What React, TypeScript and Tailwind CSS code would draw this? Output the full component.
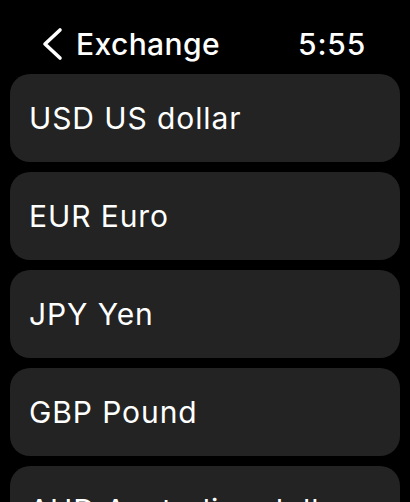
import React from 'react';

const CURRENCIES = [
  { code: 'USD', name: 'US dollar' },
  { code: 'EUR', name: 'Euro' },
  { code: 'JPY', name: 'Yen' },
  { code: 'GBP', name: 'Pound' },
  { code: 'AUD', name: 'Australian dollar' },
];

export default function App() {
  return (
    <div
      className="h-[502px] w-[410px] overflow-hidden bg-black text-white"
      style={{ fontFamily: 'Inter, "Noto Sans", sans-serif' }}
    >
      {/* Header */}
      <div className="flex h-[74px] items-center justify-between pl-[42px] pr-[44px] pt-[14px]">
        <div className="flex items-center gap-[12px]">
          <svg width="22" height="34" viewBox="0 0 22 34" fill="none">
            <polyline
              points="18,3 3,17 18,31"
              stroke="white"
              strokeWidth="3.6"
              strokeLinecap="round"
              strokeLinejoin="round"
            />
          </svg>
          <span className="text-[30px] font-medium tracking-[0.4px]">Exchange</span>
        </div>
        <span className="text-[30px] font-medium tracking-[0.8px]">5:55</span>
      </div>

      {/* Currency list */}
      <div className="flex flex-col gap-[10px] px-[10px]">
        {CURRENCIES.map((c) => (
          <div
            key={c.code}
            className="flex h-[88px] shrink-0 items-center rounded-[20px] bg-[#232323] pl-[19px] pr-[10px] text-[30px] tracking-[0.9px]"
          >
            <span className="whitespace-nowrap">
              {c.code} {c.name}
            </span>
          </div>
        ))}
      </div>
    </div>
  );
}
